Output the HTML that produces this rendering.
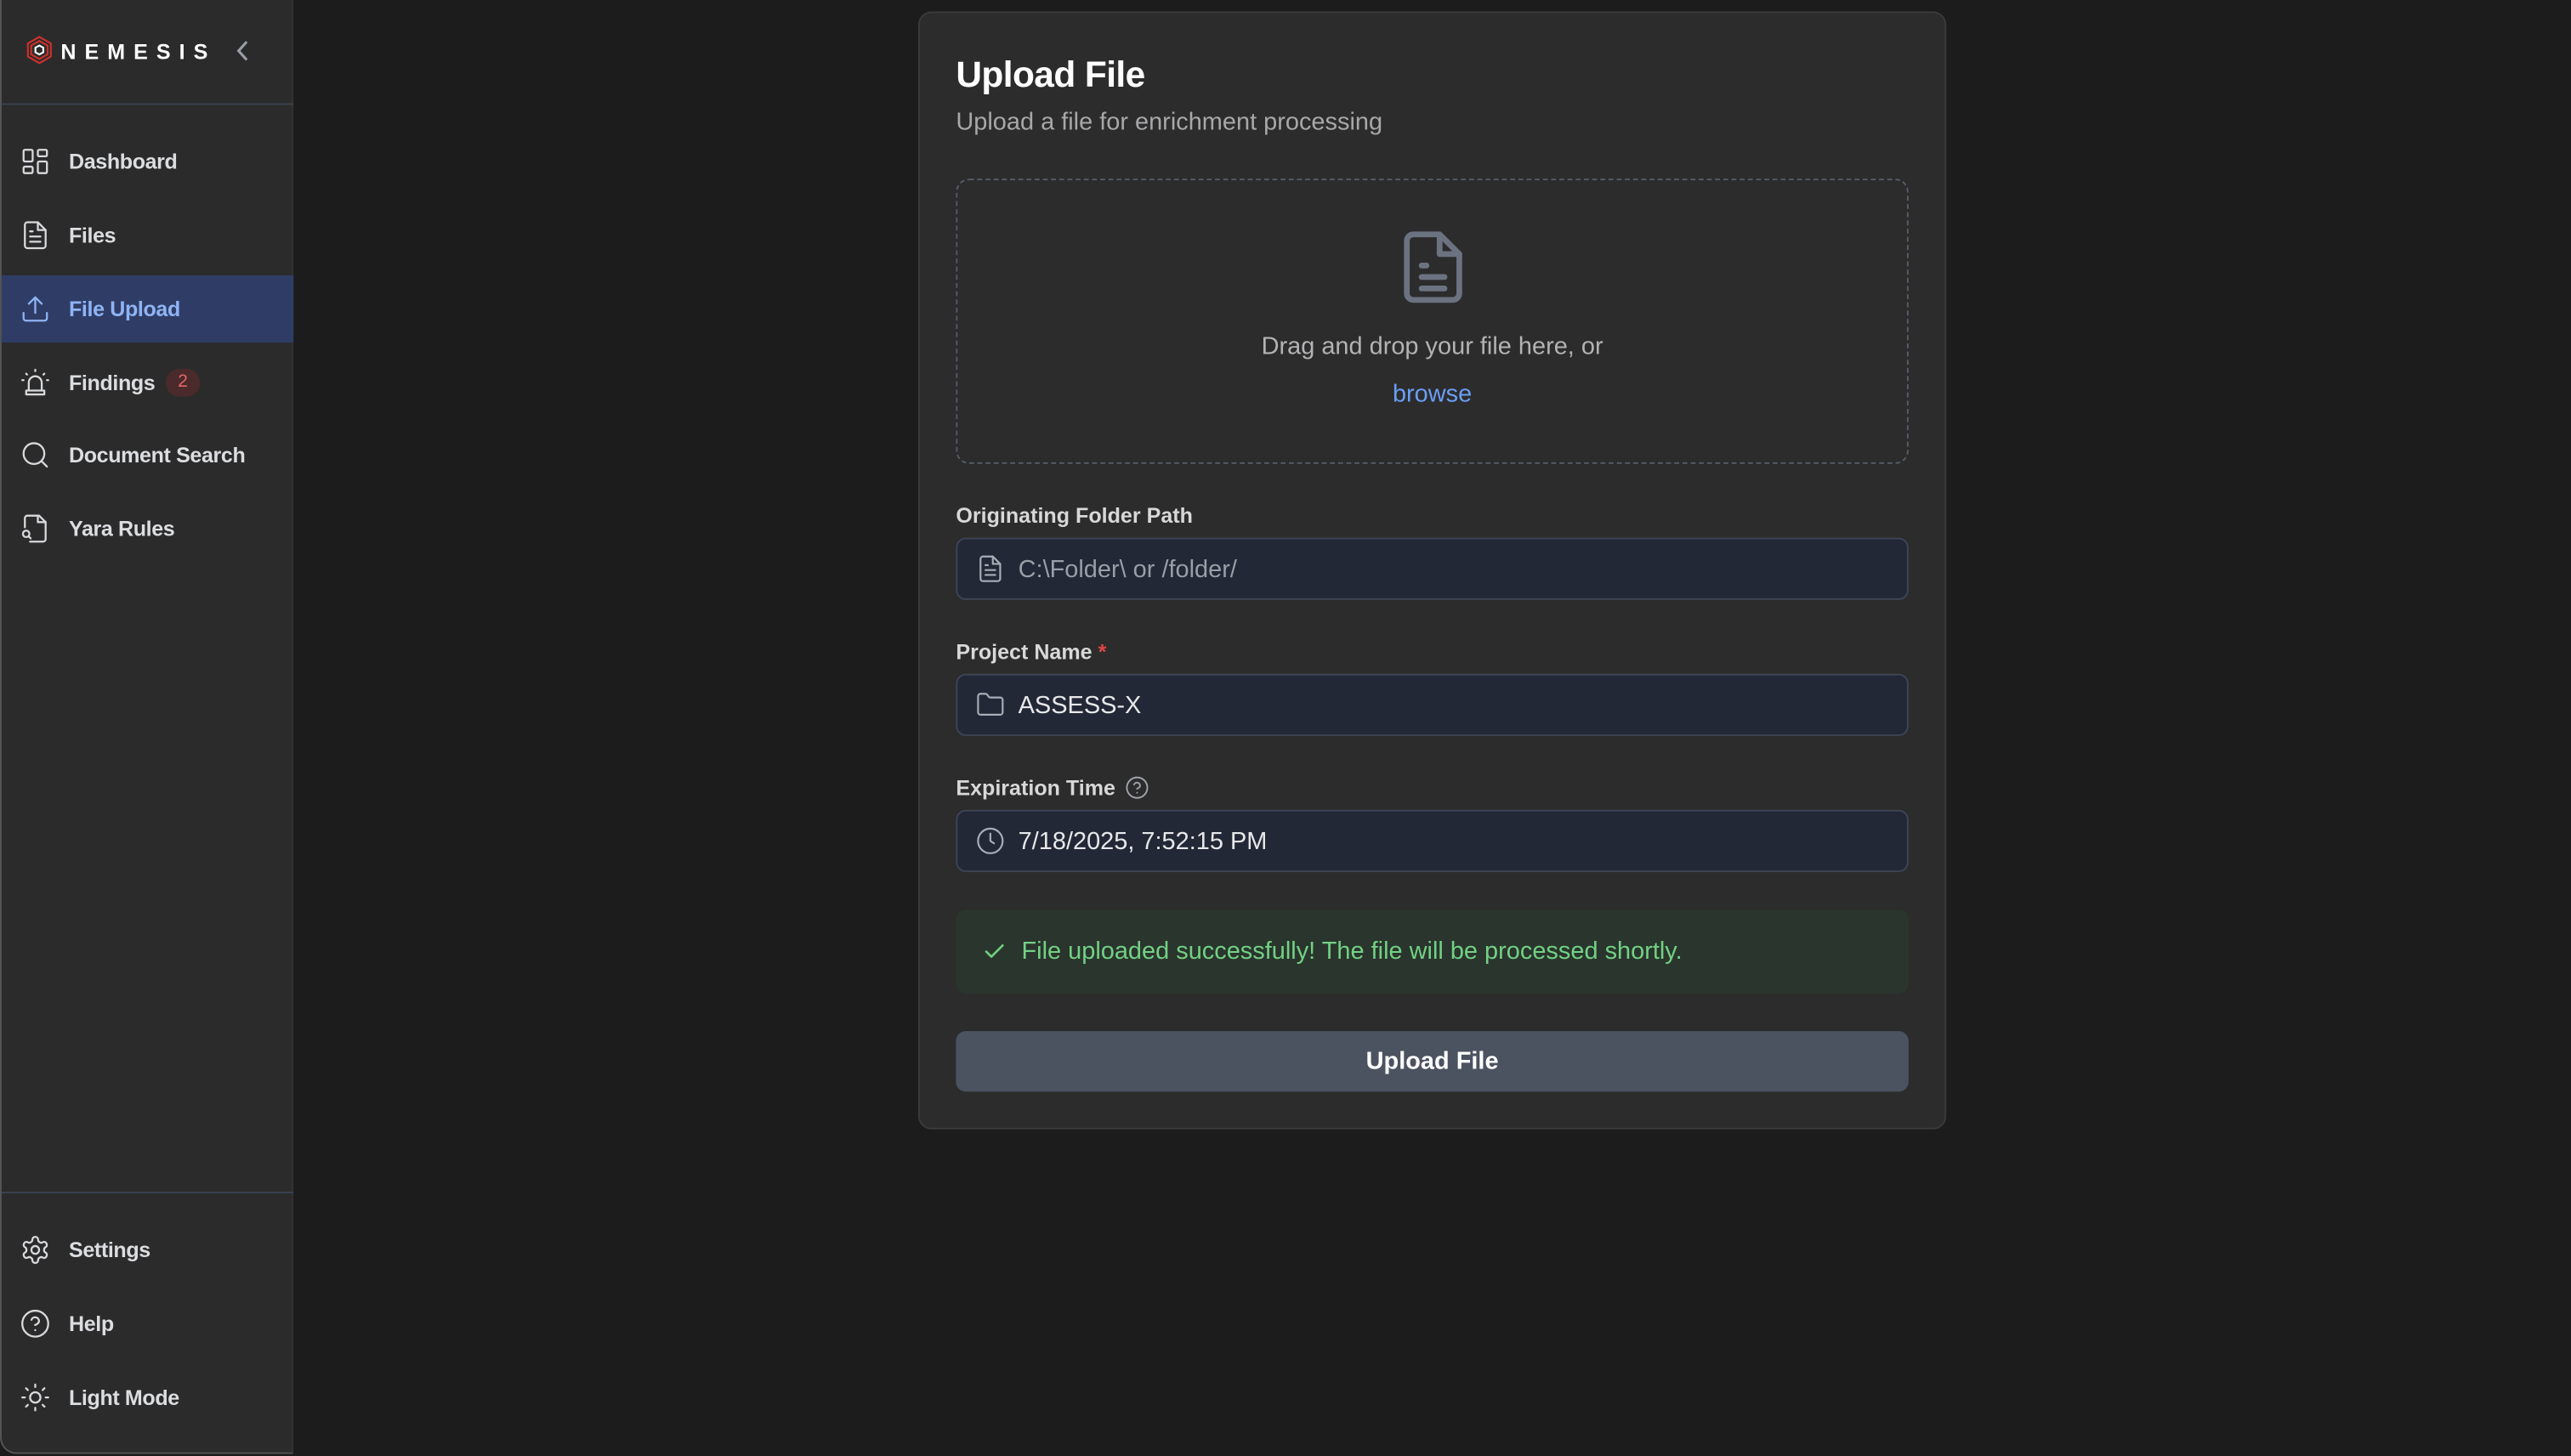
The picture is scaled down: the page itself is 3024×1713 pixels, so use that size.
<!DOCTYPE html>
<html><head><meta charset="utf-8"><style>
html,body{margin:0;padding:0;background:#1c1c1c;width:3024px;height:1713px;overflow:hidden}
#w{position:absolute;left:0;top:0;width:1568px;height:888.2px;transform:scale(1.92857);transform-origin:0 0;font-family:"Liberation Sans",sans-serif;background:#1c1c1c}
.sb{position:absolute;left:0;top:0;width:179px;height:887px;background:#2b2b2b;border-right:1px solid #333;border-left:1px solid #555;border-bottom:1px solid #555;border-radius:0 0 0 10px;box-sizing:border-box}
.div{position:absolute;left:0;width:178px;height:1px;background:#3a4250}
.ni{position:absolute;left:0;width:178px;height:41px;display:flex;align-items:center;color:#dcdde0;font-size:13px;font-weight:bold}
.ni svg{position:absolute;left:11px;width:19px;height:19px;fill:none;stroke:#d8d9dc;stroke-width:1.5;stroke-linecap:round;stroke-linejoin:round}
.ni span{position:absolute;left:41px;letter-spacing:-0.2px}
.card{position:absolute;left:560px;top:7px;width:627px;height:682px;background:#2c2c2c;border:1px solid #3a3a3a;border-radius:8px;box-sizing:border-box}
.lbl{position:absolute;left:22px;font-size:13px;font-weight:bold;color:#d8d8d8}
.inp{position:absolute;left:22px;width:581px;height:38px;background:#222836;border:1px solid #3d4454;border-radius:6px;box-sizing:border-box}
.inp svg{position:absolute;left:11px;top:9px;width:18px;height:18px;fill:none;stroke:#a9adb5;stroke-width:1.5;stroke-linecap:round;stroke-linejoin:round}
.inp span{position:absolute;left:37px;top:10px;font-size:15px;color:#e8e8ea}
</style></head><body><div id="w">
<div class="sb">
 <svg style="position:absolute;left:14px;top:21px" width="18" height="19" viewBox="0 0 18 18" fill="none" stroke="#d0302c" stroke-width="1.1"><path d="M9 1 L16 5 V13 L9 17 L2 13 V5 Z"/><path d="M9 3.5 L14 6.3 V11.7 L9 14.5 L4 11.7 V6.3 Z"/><path d="M9 6.3 L11.4 7.6 V10.4 L9 11.7 L6.6 10.4 V7.6 Z" stroke="#fff"/></svg>
 <div style="position:absolute;left:36px;top:24px;font-size:13px;font-weight:bold;color:#fff;letter-spacing:5.2px">NEMESIS</div>
 <svg style="position:absolute;left:142px;top:24px" width="10" height="14" viewBox="0 0 10 14" fill="none" stroke="#9a9ea6" stroke-width="1.6" stroke-linecap="round"><path d="M7 2 L2.5 7 L7 12"/></svg>
 <div class="div" style="top:63px"></div>
 <div class="ni" style="top:78px"><svg viewBox="0 0 24 24"><rect x="3" y="3" width="7" height="9" rx="1"/><rect x="14" y="3" width="7" height="5" rx="1"/><rect x="14" y="12" width="7" height="9" rx="1"/><rect x="3" y="16" width="7" height="5" rx="1"/></svg><span>Dashboard</span></div>
 <div class="ni" style="top:123px"><svg viewBox="0 0 24 24"><path d="M14 2H6a2 2 0 0 0-2 2v16a2 2 0 0 0 2 2h12a2 2 0 0 0 2-2V8z"/><path d="M14 2v6h6M8 13h8M8 17h8M8 9h2"/></svg><span>Files</span></div>
 <div class="ni" style="top:168px;background:#2f3d66;color:#8fb4f5"><svg viewBox="0 0 24 24" style="stroke:#8fb4f5"><path d="M3 15v4a2 2 0 0 0 2 2h14a2 2 0 0 0 2-2v-4M12 3v12M7 8l5-5 5 5"/></svg><span>File Upload</span></div>
 <div class="ni" style="top:213px"><svg viewBox="0 0 24 24"><path d="M7 18v-6a5 5 0 0 1 10 0v6M5 21h14v-3H5zM12 2v1M3 10H2M22 10h-1M5 5l.7.7M19 5l-.7.7"/></svg><span>Findings</span><div style="position:absolute;left:100px;top:12px;width:21px;height:17px;border-radius:9px;background:#4a2a2a;color:#e06666;font-size:11px;text-align:center;line-height:17px;font-weight:normal">2</div></div>
 <div class="ni" style="top:257px"><svg viewBox="0 0 24 24"><circle cx="11" cy="11" r="8"/><path d="M21 21l-4.3-4.3"/></svg><span>Document Search</span></div>
 <div class="ni" style="top:302px"><svg viewBox="0 0 24 24"><path d="M4 11V4a2 2 0 0 1 2-2h9l5 5v13a2 2 0 0 1-2 2H8"/><path d="M14 2v5h6"/><circle cx="5" cy="16" r="2.5"/><path d="M7 18l1.5 1.5"/></svg><span>Yara Rules</span></div>
 <div class="div" style="top:727px"></div>
 <div class="ni" style="top:742px"><svg viewBox="0 0 24 24"><path d="M12.2 2h-.4a2 2 0 0 0-2 2v.2a2 2 0 0 1-1 1.7l-.4.3a2 2 0 0 1-2 0l-.2-.1a2 2 0 0 0-2.7.7l-.2.4a2 2 0 0 0 .7 2.7l.2.1a2 2 0 0 1 1 1.7v.5a2 2 0 0 1-1 1.8l-.2.1a2 2 0 0 0-.7 2.7l.2.4a2 2 0 0 0 2.7.7l.2-.1a2 2 0 0 1 2 0l.4.3a2 2 0 0 1 1 1.7v.2a2 2 0 0 0 2 2h.4a2 2 0 0 0 2-2v-.2a2 2 0 0 1 1-1.7l.4-.3a2 2 0 0 1 2 0l.2.1a2 2 0 0 0 2.7-.7l.2-.4a2 2 0 0 0-.7-2.7l-.2-.1a2 2 0 0 1-1-1.8v-.5a2 2 0 0 1 1-1.7l.2-.1a2 2 0 0 0 .7-2.7l-.2-.4a2 2 0 0 0-2.7-.7l-.2.1a2 2 0 0 1-2 0l-.4-.3a2 2 0 0 1-1-1.7V4a2 2 0 0 0-2-2z"/><circle cx="12" cy="12" r="3"/></svg><span>Settings</span></div>
 <div class="ni" style="top:787px"><svg viewBox="0 0 24 24"><circle cx="12" cy="12" r="10"/><path d="M9.1 9a3 3 0 0 1 5.8 1c0 2-3 3-3 3M12 17h.01"/></svg><span>Help</span></div>
 <div class="ni" style="top:832px"><svg viewBox="0 0 24 24"><circle cx="12" cy="12" r="4"/><path d="M12 2v2M12 20v2M4.9 4.9l1.4 1.4M17.7 17.7l1.4 1.4M2 12h2M20 12h2M6.3 17.7l-1.4 1.4M19.1 4.9l-1.4 1.4"/></svg><span>Light Mode</span></div>
</div>
<div class="card">
 <div style="position:absolute;left:22px;top:25px;font-size:22px;font-weight:bold;color:#fff;letter-spacing:-0.3px">Upload File</div>
 <div style="position:absolute;left:22px;top:58px;font-size:15px;color:#a8a8aa">Upload a file for enrichment processing</div>
 <div style="position:absolute;left:22px;top:101px;width:581px;height:174px;border:1.5px dashed #565c68;border-radius:8px;box-sizing:border-box">
  <svg style="position:absolute;left:272px;top:31px" width="36" height="44" viewBox="0 0 36 44" fill="none" stroke="#6b7280" stroke-width="3.5" stroke-linecap="round" stroke-linejoin="round"><path d="M22 2H6a4 4 0 0 0-4 4v32a4 4 0 0 0 4 4h24a4 4 0 0 0 4-4V14z"/><path d="M22 2v12h12M11 21h3M11 28h14M11 35h14"/></svg>
  <div style="position:absolute;left:0;width:100%;top:93px;text-align:center;font-size:15px;color:#b3b3b5">Drag and drop your file here, or</div>
  <div style="position:absolute;left:0;width:100%;top:122px;text-align:center;font-size:15px;color:#6a9ef5">browse</div>
 </div>
 <div class="lbl" style="top:299px">Originating Folder Path</div>
 <div class="inp" style="top:320px"><svg viewBox="0 0 24 24"><path d="M14 2H6a2 2 0 0 0-2 2v16a2 2 0 0 0 2 2h12a2 2 0 0 0 2-2V8z"/><path d="M14 2v6h6M8 13h8M8 17h8M8 9h2"/></svg><span style="color:#9a9ea6">C:\Folder\ or /folder/</span></div>
 <div class="lbl" style="top:382px">Project Name <span style="color:#e04444">*</span></div>
 <div class="inp" style="top:403px"><svg viewBox="0 0 24 24"><path d="M20 20a2 2 0 0 0 2-2V8a2 2 0 0 0-2-2h-7.9a2 2 0 0 1-1.7-.9l-.8-1.2A2 2 0 0 0 7.9 3H4a2 2 0 0 0-2 2v13a2 2 0 0 0 2 2z"/></svg><span>ASSESS-X</span></div>
 <div class="lbl" style="top:465px">Expiration Time</div>
 <svg style="position:absolute;left:125px;top:465px" width="15" height="15" viewBox="0 0 24 24" fill="none" stroke="#a0a4ab" stroke-width="1.6" stroke-linecap="round"><circle cx="12" cy="12" r="10"/><path d="M9.1 9a3 3 0 0 1 5.8 1c0 2-3 3-3 3M12 17h.01"/></svg>
 <div class="inp" style="top:486px"><svg viewBox="0 0 24 24"><circle cx="12" cy="12" r="10"/><path d="M12 6v6l3 2"/></svg><span>7/18/2025, 7:52:15 PM</span></div>
 <div style="position:absolute;left:22px;top:547px;width:581px;height:51px;background:#2a352d;border-radius:6px">
  <svg style="position:absolute;left:16px;top:18px" width="15" height="15" viewBox="0 0 24 24" fill="none" stroke="#6fcf7f" stroke-width="2.2" stroke-linecap="round" stroke-linejoin="round"><path d="M20 6L9 17l-5-5"/></svg>
  <div style="position:absolute;left:40px;top:17px;font-size:15px;color:#72d184">File uploaded successfully! The file will be processed shortly.</div>
 </div>
 <div style="position:absolute;left:22px;top:621px;width:581px;height:37px;background:#4b5260;border-radius:6px;text-align:center;line-height:37px;font-size:15px;font-weight:bold;color:#fff">Upload File</div>
</div>
</div></body></html>
